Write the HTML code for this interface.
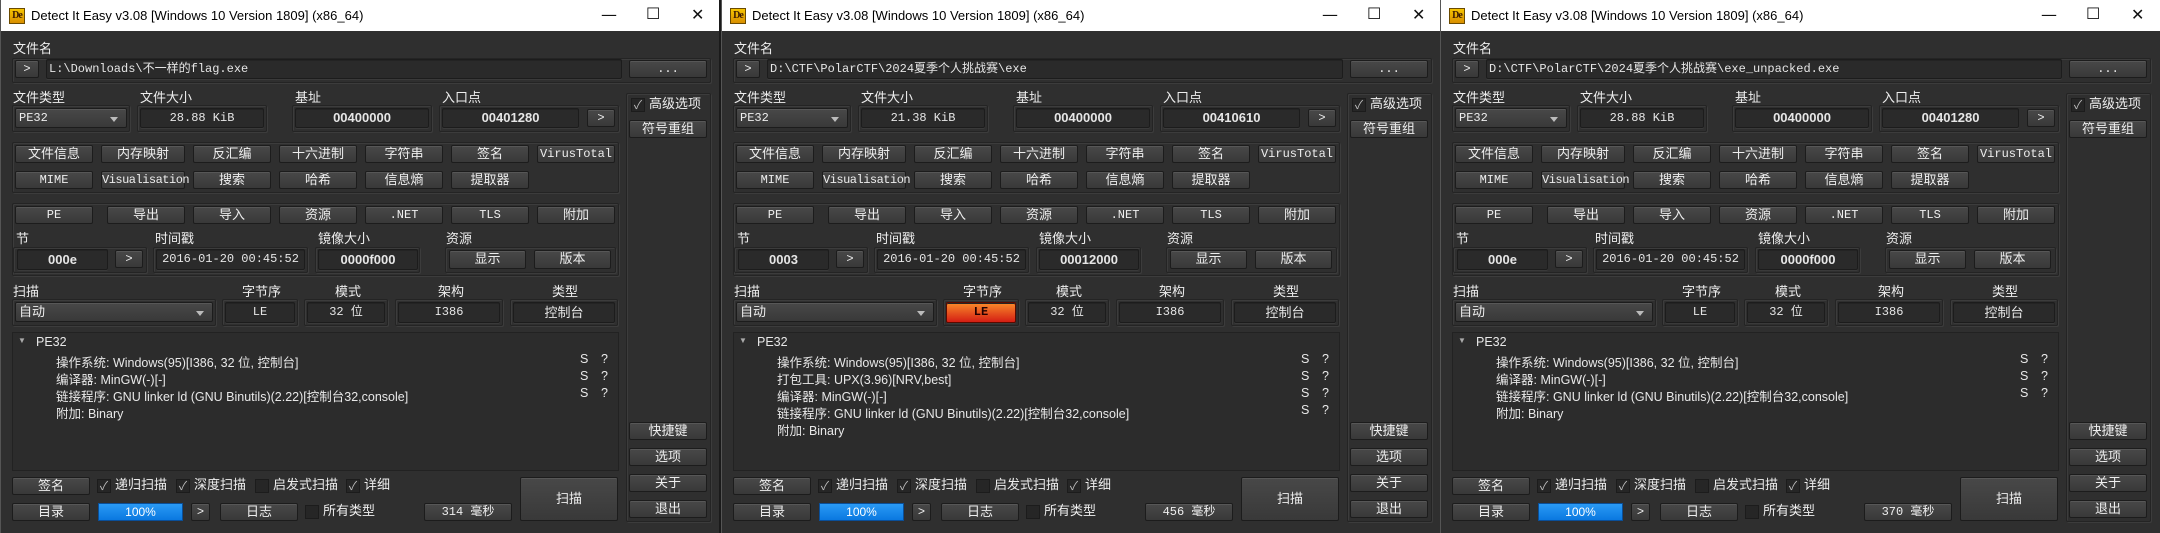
<!DOCTYPE html><html><head><meta charset="utf-8"><style>
*{box-sizing:border-box;margin:0;padding:0}
body{width:2160px;height:533px;background:#1a1a1a;position:relative;overflow:hidden;font-family:"Liberation Sans","Noto Sans CJK SC",sans-serif;color:#e6e6e6}
.w{position:absolute;top:0;width:719px;height:533px;background:#2f2f2f;border-left:1px solid #555;overflow:hidden}
.w>*{position:absolute}
.tb{left:0;top:0;width:100%;height:31px;background:#fff;color:#000;font-size:13px}
.ic{left:8px;top:8px;width:16px;height:16px;background:linear-gradient(#f5c400,#d98f00);border:1px solid #6a4a00;font:bold 10px "Liberation Serif",serif;color:#3a1a00;line-height:14px;text-align:center;letter-spacing:-1px}
.tt{left:30px;top:8px;font-size:13px;white-space:nowrap;color:#000}
.tbn{top:5px;font-size:16px;color:#111;font-family:"DejaVu Sans",sans-serif}
.l{font-size:13px;color:#eee;white-space:nowrap;line-height:14px}
.g{border:1px solid #242424;box-shadow:1px 1px 0 #3c3c3c,inset 1px 1px 0 #3c3c3c;border-radius:2px}
.b{height:18px;background:linear-gradient(#484848,#393939);border:1px solid #1c1c1c;border-radius:2px;box-shadow:inset 0 1px 0 #575757;color:#eee;font-size:13px;line-height:16px;text-align:center;white-space:nowrap}
.m{font-family:"Liberation Mono","Noto Sans CJK SC",monospace;font-size:12px}
.f{background:#2a2a2a;border:1px solid #1c1c1c;box-shadow:inset 0 1px 0 #232323,0 1px 0 #3a3a3a;border-radius:2px;color:#e6e6e6;text-align:center;font-size:12px;white-space:nowrap}
.bd{font-weight:bold;font-family:"Liberation Sans",sans-serif;font-size:13px}
.cb{width:14px;height:14px;background:#262626;border:1px solid #1c1c1c;color:#bbb;font-size:12px;line-height:12px;text-align:center}
.res{background:#2c2c2c;border:1px solid #222}
.res div{position:absolute;font-size:12.5px;white-space:nowrap;color:#e8e8e8}
.combo:after{content:"";position:absolute;right:8px;top:8px;border:4px solid transparent;border-top:5px solid #bbb}
.pg{background:linear-gradient(#2a9af5,#0a78e0);border:1px solid #0a4f99;color:#fff;font-size:12px;text-align:center;line-height:16px;height:18px}
</style></head><body>

<!-- WINDOW 1 -->
<div class="w" style="left:0">
<div class="tb"></div><div class="ic">De</div><div class="tt">Detect It Easy v3.08 [Windows 10 Version 1809] (x86_64)</div>
<div class="tbn" style="left:600px">—</div><div class="tbn" style="left:645px;top:4px">☐</div><div class="tbn" style="left:690px">✕</div>
<div class="l" style="left:12px;top:42px">文件名</div>
<div class="g" style="left:11px;top:58px;width:699px;height:25px"></div>
<div class="b m" style="left:14px;top:60px;width:24px">&gt;</div>
<div class="f m" style="left:45px;top:59px;width:576px;height:20px;text-align:left;padding-left:2px;line-height:18px">L:\Downloads\不一样的flag.exe</div>
<div class="b m" style="left:628px;top:60px;width:78px">...</div>
<div class="l" style="left:12px;top:91px">文件类型</div><div class="l" style="left:139px;top:91px">文件大小</div><div class="l" style="left:294px;top:91px">基址</div><div class="l" style="left:441px;top:91px">入口点</div>
<div class="g" style="left:11px;top:105px;width:118px;height:27px"></div>
<div class="b m combo" style="left:14px;top:108px;width:112px;height:20px;text-align:left;padding-left:3px;line-height:18px">PE32</div>
<div class="g" style="left:136px;top:105px;width:130px;height:27px"></div>
<div class="f m" style="left:139px;top:108px;width:124px;height:20px;line-height:18px">28.88 KiB</div>
<div class="g" style="left:291px;top:105px;width:140px;height:27px"></div>
<div class="f bd" style="left:294px;top:108px;width:134px;height:20px;line-height:18px">00400000</div>
<div class="g" style="left:438px;top:105px;width:180px;height:27px"></div>
<div class="f bd" style="left:441px;top:108px;width:137px;height:20px;line-height:18px">00401280</div>
<div class="b m" style="left:586px;top:109px;width:28px">&gt;</div>
<div class="g" style="left:625px;top:93px;width:85px;height:429px"></div>
<div class="cb" style="left:630px;top:98px">✓</div><div class="l" style="left:648px;top:97px">高级选项</div>
<div class="b" style="left:628px;top:120px;width:78px">符号重组</div>
<div class="g" style="left:11px;top:142px;width:607px;height:51px"></div>
<div class="b" style="left:14px;top:145px;width:78px">文件信息</div><div class="b" style="left:100px;top:145px;width:84px">内存映射</div><div class="b" style="left:192px;top:145px;width:78px">反汇编</div><div class="b" style="left:278px;top:145px;width:78px">十六进制</div><div class="b" style="left:364px;top:145px;width:78px">字符串</div><div class="b" style="left:450px;top:145px;width:78px">签名</div><div class="b m" style="left:536px;top:145px;width:78px">VirusTotal</div>
<div class="b m" style="left:14px;top:171px;width:78px">MIME</div><div class="b m" style="left:100px;top:171px;width:84px;letter-spacing:-0.5px">Visualisation</div><div class="b" style="left:192px;top:171px;width:78px">搜索</div><div class="b" style="left:278px;top:171px;width:78px">哈希</div><div class="b" style="left:364px;top:171px;width:78px">信息熵</div><div class="b" style="left:450px;top:171px;width:78px">提取器</div>
<div class="g" style="left:11px;top:203px;width:607px;height:73px"></div>
<div class="b m" style="left:14px;top:206px;width:78px">PE</div><div class="b" style="left:106px;top:206px;width:78px">导出</div><div class="b" style="left:192px;top:206px;width:78px">导入</div><div class="b" style="left:278px;top:206px;width:78px">资源</div><div class="b m" style="left:364px;top:206px;width:78px">.NET</div><div class="b m" style="left:450px;top:206px;width:78px">TLS</div><div class="b" style="left:536px;top:206px;width:78px">附加</div>
<div class="l" style="left:15px;top:232px">节</div><div class="l" style="left:154px;top:232px">时间戳</div><div class="l" style="left:317px;top:232px">镜像大小</div><div class="l" style="left:445px;top:232px">资源</div>
<div class="g" style="left:12px;top:247px;width:134px;height:26px"></div>
<div class="f bd" style="left:16px;top:249px;width:91px;height:21px;line-height:19px">000e</div>
<div class="b m" style="left:114px;top:250px;width:28px">&gt;</div>
<div class="g" style="left:152px;top:247px;width:155px;height:26px"></div>
<div class="f m" style="left:155px;top:249px;width:149px;height:21px;line-height:19px">2016-01-20 00:45:52</div>
<div class="g" style="left:314px;top:247px;width:105px;height:26px"></div>
<div class="f bd" style="left:317px;top:249px;width:100px;height:21px;line-height:19px">0000f000</div>
<div class="g" style="left:444px;top:247px;width:171px;height:26px"></div>
<div class="b" style="left:448px;top:250px;width:77px;height:19px">显示</div><div class="b" style="left:533px;top:250px;width:77px;height:19px">版本</div>
<div class="l" style="left:12px;top:285px">扫描</div><div class="l" style="left:241px;top:285px">字节序</div><div class="l" style="left:334px;top:285px">模式</div><div class="l" style="left:437px;top:285px">架构</div><div class="l" style="left:551px;top:285px">类型</div>
<div class="g" style="left:11px;top:299px;width:204px;height:27px"></div>
<div class="b combo" style="left:14px;top:302px;width:198px;height:20px;text-align:left;padding-left:3px;line-height:18px">自动</div>
<div class="g" style="left:221px;top:299px;width:76px;height:27px"></div><div class="f m" style="left:224px;top:302px;width:70px;height:21px;line-height:19px">LE</div>
<div class="g" style="left:303px;top:299px;width:84px;height:27px"></div><div class="f m" style="left:306px;top:302px;width:78px;height:21px;line-height:19px">32 位</div>
<div class="g" style="left:394px;top:299px;width:108px;height:27px"></div><div class="f m" style="left:397px;top:302px;width:102px;height:21px;line-height:19px">I386</div>
<div class="g" style="left:509px;top:299px;width:108px;height:27px"></div><div class="f" style="left:512px;top:302px;width:102px;height:21px;line-height:19px;font-size:13px">控制台</div>
<div class="res" style="left:11px;top:332px;width:607px;height:139px">
<div style="left:5px;top:3px;font-size:8px;color:#aaa">▼</div><div style="left:23px;top:2px">PE32</div>
<div style="left:43px;top:19px">操作系统: Windows(95)[I386, 32 位, 控制台]</div><div style="left:567px;top:19px">S</div><div style="left:588px;top:19px">?</div>
<div style="left:43px;top:36px">编译器: MinGW(-)[-]</div><div style="left:567px;top:36px">S</div><div style="left:588px;top:36px">?</div>
<div style="left:43px;top:53px">链接程序: GNU linker ld (GNU Binutils)(2.22)[控制台32,console]</div><div style="left:567px;top:53px">S</div><div style="left:588px;top:53px">?</div>
<div style="left:43px;top:70px">附加: Binary</div>
</div>
<div class="b" style="left:628px;top:422px;width:78px">快捷键</div><div class="b" style="left:628px;top:448px;width:78px">选项</div><div class="b" style="left:628px;top:474px;width:78px">关于</div><div class="b" style="left:628px;top:500px;width:78px">退出</div>
<div class="b" style="left:11px;top:477px;width:78px">签名</div>
<div class="cb" style="left:96px;top:479px">✓</div><div class="l" style="left:114px;top:478px">递归扫描</div>
<div class="cb" style="left:175px;top:479px">✓</div><div class="l" style="left:193px;top:478px">深度扫描</div>
<div class="cb" style="left:254px;top:479px"></div><div class="l" style="left:272px;top:478px">启发式扫描</div>
<div class="cb" style="left:345px;top:479px">✓</div><div class="l" style="left:363px;top:478px">详细</div>
<div class="b" style="left:11px;top:503px;width:78px">目录</div>
<div class="pg" style="left:97px;top:503px;width:85px">100%</div>
<div class="b m" style="left:190px;top:503px;width:19px">&gt;</div>
<div class="b" style="left:219px;top:503px;width:78px">日志</div>
<div class="cb" style="left:304px;top:505px"></div><div class="l" style="left:322px;top:504px">所有类型</div>
<div class="b m" style="left:423px;top:503px;width:88px">314 毫秒</div>
<div class="b" style="left:519px;top:477px;width:98px;height:44px;line-height:42px">扫描</div>
</div>

<!-- WINDOW 2 -->
<div class="w" style="left:721px">
<div class="tb"></div><div class="ic">De</div><div class="tt">Detect It Easy v3.08 [Windows 10 Version 1809] (x86_64)</div>
<div class="tbn" style="left:600px">—</div><div class="tbn" style="left:645px;top:4px">☐</div><div class="tbn" style="left:690px">✕</div>
<div class="l" style="left:12px;top:42px">文件名</div>
<div class="g" style="left:11px;top:58px;width:699px;height:25px"></div>
<div class="b m" style="left:14px;top:60px;width:24px">&gt;</div>
<div class="f m" style="left:45px;top:59px;width:576px;height:20px;text-align:left;padding-left:2px;line-height:18px">D:\CTF\PolarCTF\2024夏季个人挑战赛\exe</div>
<div class="b m" style="left:628px;top:60px;width:78px">...</div>
<div class="l" style="left:12px;top:91px">文件类型</div><div class="l" style="left:139px;top:91px">文件大小</div><div class="l" style="left:294px;top:91px">基址</div><div class="l" style="left:441px;top:91px">入口点</div>
<div class="g" style="left:11px;top:105px;width:118px;height:27px"></div>
<div class="b m combo" style="left:14px;top:108px;width:112px;height:20px;text-align:left;padding-left:3px;line-height:18px">PE32</div>
<div class="g" style="left:136px;top:105px;width:130px;height:27px"></div>
<div class="f m" style="left:139px;top:108px;width:124px;height:20px;line-height:18px">21.38 KiB</div>
<div class="g" style="left:291px;top:105px;width:140px;height:27px"></div>
<div class="f bd" style="left:294px;top:108px;width:134px;height:20px;line-height:18px">00400000</div>
<div class="g" style="left:438px;top:105px;width:180px;height:27px"></div>
<div class="f bd" style="left:441px;top:108px;width:137px;height:20px;line-height:18px">00410610</div>
<div class="b m" style="left:586px;top:109px;width:28px">&gt;</div>
<div class="g" style="left:625px;top:93px;width:85px;height:429px"></div>
<div class="cb" style="left:630px;top:98px">✓</div><div class="l" style="left:648px;top:97px">高级选项</div>
<div class="b" style="left:628px;top:120px;width:78px">符号重组</div>
<div class="g" style="left:11px;top:142px;width:607px;height:51px"></div>
<div class="b" style="left:14px;top:145px;width:78px">文件信息</div><div class="b" style="left:100px;top:145px;width:84px">内存映射</div><div class="b" style="left:192px;top:145px;width:78px">反汇编</div><div class="b" style="left:278px;top:145px;width:78px">十六进制</div><div class="b" style="left:364px;top:145px;width:78px">字符串</div><div class="b" style="left:450px;top:145px;width:78px">签名</div><div class="b m" style="left:536px;top:145px;width:78px">VirusTotal</div>
<div class="b m" style="left:14px;top:171px;width:78px">MIME</div><div class="b m" style="left:100px;top:171px;width:84px;letter-spacing:-0.5px">Visualisation</div><div class="b" style="left:192px;top:171px;width:78px">搜索</div><div class="b" style="left:278px;top:171px;width:78px">哈希</div><div class="b" style="left:364px;top:171px;width:78px">信息熵</div><div class="b" style="left:450px;top:171px;width:78px">提取器</div>
<div class="g" style="left:11px;top:203px;width:607px;height:73px"></div>
<div class="b m" style="left:14px;top:206px;width:78px">PE</div><div class="b" style="left:106px;top:206px;width:78px">导出</div><div class="b" style="left:192px;top:206px;width:78px">导入</div><div class="b" style="left:278px;top:206px;width:78px">资源</div><div class="b m" style="left:364px;top:206px;width:78px">.NET</div><div class="b m" style="left:450px;top:206px;width:78px">TLS</div><div class="b" style="left:536px;top:206px;width:78px">附加</div>
<div class="l" style="left:15px;top:232px">节</div><div class="l" style="left:154px;top:232px">时间戳</div><div class="l" style="left:317px;top:232px">镜像大小</div><div class="l" style="left:445px;top:232px">资源</div>
<div class="g" style="left:12px;top:247px;width:134px;height:26px"></div>
<div class="f bd" style="left:16px;top:249px;width:91px;height:21px;line-height:19px">0003</div>
<div class="b m" style="left:114px;top:250px;width:28px">&gt;</div>
<div class="g" style="left:152px;top:247px;width:155px;height:26px"></div>
<div class="f m" style="left:155px;top:249px;width:149px;height:21px;line-height:19px">2016-01-20 00:45:52</div>
<div class="g" style="left:314px;top:247px;width:105px;height:26px"></div>
<div class="f bd" style="left:317px;top:249px;width:100px;height:21px;line-height:19px">00012000</div>
<div class="g" style="left:444px;top:247px;width:171px;height:26px"></div>
<div class="b" style="left:448px;top:250px;width:77px;height:19px">显示</div><div class="b" style="left:533px;top:250px;width:77px;height:19px">版本</div>
<div class="l" style="left:12px;top:285px">扫描</div><div class="l" style="left:241px;top:285px">字节序</div><div class="l" style="left:334px;top:285px">模式</div><div class="l" style="left:437px;top:285px">架构</div><div class="l" style="left:551px;top:285px">类型</div>
<div class="g" style="left:11px;top:299px;width:204px;height:27px"></div>
<div class="b combo" style="left:14px;top:302px;width:198px;height:20px;text-align:left;padding-left:3px;line-height:18px">自动</div>
<div class="g" style="left:221px;top:299px;width:76px;height:27px"></div><div class="f m" style="left:224px;top:302px;width:70px;height:21px;line-height:19px;background:linear-gradient(#f98a2a,#d41e14);color:#200;border-color:#5a0a00;font-weight:bold">LE</div>
<div class="g" style="left:303px;top:299px;width:84px;height:27px"></div><div class="f m" style="left:306px;top:302px;width:78px;height:21px;line-height:19px">32 位</div>
<div class="g" style="left:394px;top:299px;width:108px;height:27px"></div><div class="f m" style="left:397px;top:302px;width:102px;height:21px;line-height:19px">I386</div>
<div class="g" style="left:509px;top:299px;width:108px;height:27px"></div><div class="f" style="left:512px;top:302px;width:102px;height:21px;line-height:19px;font-size:13px">控制台</div>
<div class="res" style="left:11px;top:332px;width:607px;height:139px">
<div style="left:5px;top:3px;font-size:8px;color:#aaa">▼</div><div style="left:23px;top:2px">PE32</div>
<div style="left:43px;top:19px">操作系统: Windows(95)[I386, 32 位, 控制台]</div><div style="left:567px;top:19px">S</div><div style="left:588px;top:19px">?</div>
<div style="left:43px;top:36px">打包工具: UPX(3.96)[NRV,best]</div><div style="left:567px;top:36px">S</div><div style="left:588px;top:36px">?</div>
<div style="left:43px;top:53px">编译器: MinGW(-)[-]</div><div style="left:567px;top:53px">S</div><div style="left:588px;top:53px">?</div>
<div style="left:43px;top:70px">链接程序: GNU linker ld (GNU Binutils)(2.22)[控制台32,console]</div><div style="left:567px;top:70px">S</div><div style="left:588px;top:70px">?</div>
<div style="left:43px;top:87px">附加: Binary</div>
</div>
<div class="b" style="left:628px;top:422px;width:78px">快捷键</div><div class="b" style="left:628px;top:448px;width:78px">选项</div><div class="b" style="left:628px;top:474px;width:78px">关于</div><div class="b" style="left:628px;top:500px;width:78px">退出</div>
<div class="b" style="left:11px;top:477px;width:78px">签名</div>
<div class="cb" style="left:96px;top:479px">✓</div><div class="l" style="left:114px;top:478px">递归扫描</div>
<div class="cb" style="left:175px;top:479px">✓</div><div class="l" style="left:193px;top:478px">深度扫描</div>
<div class="cb" style="left:254px;top:479px"></div><div class="l" style="left:272px;top:478px">启发式扫描</div>
<div class="cb" style="left:345px;top:479px">✓</div><div class="l" style="left:363px;top:478px">详细</div>
<div class="b" style="left:11px;top:503px;width:78px">目录</div>
<div class="pg" style="left:97px;top:503px;width:85px">100%</div>
<div class="b m" style="left:190px;top:503px;width:19px">&gt;</div>
<div class="b" style="left:219px;top:503px;width:78px">日志</div>
<div class="cb" style="left:304px;top:505px"></div><div class="l" style="left:322px;top:504px">所有类型</div>
<div class="b m" style="left:423px;top:503px;width:88px">456 毫秒</div>
<div class="b" style="left:519px;top:477px;width:98px;height:44px;line-height:42px">扫描</div>
</div>

<!-- WINDOW 3 -->
<div class="w" style="left:1440px;width:720px">
<div class="tb"></div><div class="ic">De</div><div class="tt">Detect It Easy v3.08 [Windows 10 Version 1809] (x86_64)</div>
<div class="tbn" style="left:600px">—</div><div class="tbn" style="left:645px;top:4px">☐</div><div class="tbn" style="left:690px">✕</div>
<div class="l" style="left:12px;top:42px">文件名</div>
<div class="g" style="left:11px;top:58px;width:699px;height:25px"></div>
<div class="b m" style="left:14px;top:60px;width:24px">&gt;</div>
<div class="f m" style="left:45px;top:59px;width:576px;height:20px;text-align:left;padding-left:2px;line-height:18px">D:\CTF\PolarCTF\2024夏季个人挑战赛\exe_unpacked.exe</div>
<div class="b m" style="left:628px;top:60px;width:78px">...</div>
<div class="l" style="left:12px;top:91px">文件类型</div><div class="l" style="left:139px;top:91px">文件大小</div><div class="l" style="left:294px;top:91px">基址</div><div class="l" style="left:441px;top:91px">入口点</div>
<div class="g" style="left:11px;top:105px;width:118px;height:27px"></div>
<div class="b m combo" style="left:14px;top:108px;width:112px;height:20px;text-align:left;padding-left:3px;line-height:18px">PE32</div>
<div class="g" style="left:136px;top:105px;width:130px;height:27px"></div>
<div class="f m" style="left:139px;top:108px;width:124px;height:20px;line-height:18px">28.88 KiB</div>
<div class="g" style="left:291px;top:105px;width:140px;height:27px"></div>
<div class="f bd" style="left:294px;top:108px;width:134px;height:20px;line-height:18px">00400000</div>
<div class="g" style="left:438px;top:105px;width:180px;height:27px"></div>
<div class="f bd" style="left:441px;top:108px;width:137px;height:20px;line-height:18px">00401280</div>
<div class="b m" style="left:586px;top:109px;width:28px">&gt;</div>
<div class="g" style="left:625px;top:93px;width:85px;height:429px"></div>
<div class="cb" style="left:630px;top:98px">✓</div><div class="l" style="left:648px;top:97px">高级选项</div>
<div class="b" style="left:628px;top:120px;width:78px">符号重组</div>
<div class="g" style="left:11px;top:142px;width:607px;height:51px"></div>
<div class="b" style="left:14px;top:145px;width:78px">文件信息</div><div class="b" style="left:100px;top:145px;width:84px">内存映射</div><div class="b" style="left:192px;top:145px;width:78px">反汇编</div><div class="b" style="left:278px;top:145px;width:78px">十六进制</div><div class="b" style="left:364px;top:145px;width:78px">字符串</div><div class="b" style="left:450px;top:145px;width:78px">签名</div><div class="b m" style="left:536px;top:145px;width:78px">VirusTotal</div>
<div class="b m" style="left:14px;top:171px;width:78px">MIME</div><div class="b m" style="left:100px;top:171px;width:84px;letter-spacing:-0.5px">Visualisation</div><div class="b" style="left:192px;top:171px;width:78px">搜索</div><div class="b" style="left:278px;top:171px;width:78px">哈希</div><div class="b" style="left:364px;top:171px;width:78px">信息熵</div><div class="b" style="left:450px;top:171px;width:78px">提取器</div>
<div class="g" style="left:11px;top:203px;width:607px;height:73px"></div>
<div class="b m" style="left:14px;top:206px;width:78px">PE</div><div class="b" style="left:106px;top:206px;width:78px">导出</div><div class="b" style="left:192px;top:206px;width:78px">导入</div><div class="b" style="left:278px;top:206px;width:78px">资源</div><div class="b m" style="left:364px;top:206px;width:78px">.NET</div><div class="b m" style="left:450px;top:206px;width:78px">TLS</div><div class="b" style="left:536px;top:206px;width:78px">附加</div>
<div class="l" style="left:15px;top:232px">节</div><div class="l" style="left:154px;top:232px">时间戳</div><div class="l" style="left:317px;top:232px">镜像大小</div><div class="l" style="left:445px;top:232px">资源</div>
<div class="g" style="left:12px;top:247px;width:134px;height:26px"></div>
<div class="f bd" style="left:16px;top:249px;width:91px;height:21px;line-height:19px">000e</div>
<div class="b m" style="left:114px;top:250px;width:28px">&gt;</div>
<div class="g" style="left:152px;top:247px;width:155px;height:26px"></div>
<div class="f m" style="left:155px;top:249px;width:149px;height:21px;line-height:19px">2016-01-20 00:45:52</div>
<div class="g" style="left:314px;top:247px;width:105px;height:26px"></div>
<div class="f bd" style="left:317px;top:249px;width:100px;height:21px;line-height:19px">0000f000</div>
<div class="g" style="left:444px;top:247px;width:171px;height:26px"></div>
<div class="b" style="left:448px;top:250px;width:77px;height:19px">显示</div><div class="b" style="left:533px;top:250px;width:77px;height:19px">版本</div>
<div class="l" style="left:12px;top:285px">扫描</div><div class="l" style="left:241px;top:285px">字节序</div><div class="l" style="left:334px;top:285px">模式</div><div class="l" style="left:437px;top:285px">架构</div><div class="l" style="left:551px;top:285px">类型</div>
<div class="g" style="left:11px;top:299px;width:204px;height:27px"></div>
<div class="b combo" style="left:14px;top:302px;width:198px;height:20px;text-align:left;padding-left:3px;line-height:18px">自动</div>
<div class="g" style="left:221px;top:299px;width:76px;height:27px"></div><div class="f m" style="left:224px;top:302px;width:70px;height:21px;line-height:19px">LE</div>
<div class="g" style="left:303px;top:299px;width:84px;height:27px"></div><div class="f m" style="left:306px;top:302px;width:78px;height:21px;line-height:19px">32 位</div>
<div class="g" style="left:394px;top:299px;width:108px;height:27px"></div><div class="f m" style="left:397px;top:302px;width:102px;height:21px;line-height:19px">I386</div>
<div class="g" style="left:509px;top:299px;width:108px;height:27px"></div><div class="f" style="left:512px;top:302px;width:102px;height:21px;line-height:19px;font-size:13px">控制台</div>
<div class="res" style="left:11px;top:332px;width:607px;height:139px">
<div style="left:5px;top:3px;font-size:8px;color:#aaa">▼</div><div style="left:23px;top:2px">PE32</div>
<div style="left:43px;top:19px">操作系统: Windows(95)[I386, 32 位, 控制台]</div><div style="left:567px;top:19px">S</div><div style="left:588px;top:19px">?</div>
<div style="left:43px;top:36px">编译器: MinGW(-)[-]</div><div style="left:567px;top:36px">S</div><div style="left:588px;top:36px">?</div>
<div style="left:43px;top:53px">链接程序: GNU linker ld (GNU Binutils)(2.22)[控制台32,console]</div><div style="left:567px;top:53px">S</div><div style="left:588px;top:53px">?</div>
<div style="left:43px;top:70px">附加: Binary</div>
</div>
<div class="b" style="left:628px;top:422px;width:78px">快捷键</div><div class="b" style="left:628px;top:448px;width:78px">选项</div><div class="b" style="left:628px;top:474px;width:78px">关于</div><div class="b" style="left:628px;top:500px;width:78px">退出</div>
<div class="b" style="left:11px;top:477px;width:78px">签名</div>
<div class="cb" style="left:96px;top:479px">✓</div><div class="l" style="left:114px;top:478px">递归扫描</div>
<div class="cb" style="left:175px;top:479px">✓</div><div class="l" style="left:193px;top:478px">深度扫描</div>
<div class="cb" style="left:254px;top:479px"></div><div class="l" style="left:272px;top:478px">启发式扫描</div>
<div class="cb" style="left:345px;top:479px">✓</div><div class="l" style="left:363px;top:478px">详细</div>
<div class="b" style="left:11px;top:503px;width:78px">目录</div>
<div class="pg" style="left:97px;top:503px;width:85px">100%</div>
<div class="b m" style="left:190px;top:503px;width:19px">&gt;</div>
<div class="b" style="left:219px;top:503px;width:78px">日志</div>
<div class="cb" style="left:304px;top:505px"></div><div class="l" style="left:322px;top:504px">所有类型</div>
<div class="b m" style="left:423px;top:503px;width:88px">370 毫秒</div>
<div class="b" style="left:519px;top:477px;width:98px;height:44px;line-height:42px">扫描</div>
</div>
</body></html>
